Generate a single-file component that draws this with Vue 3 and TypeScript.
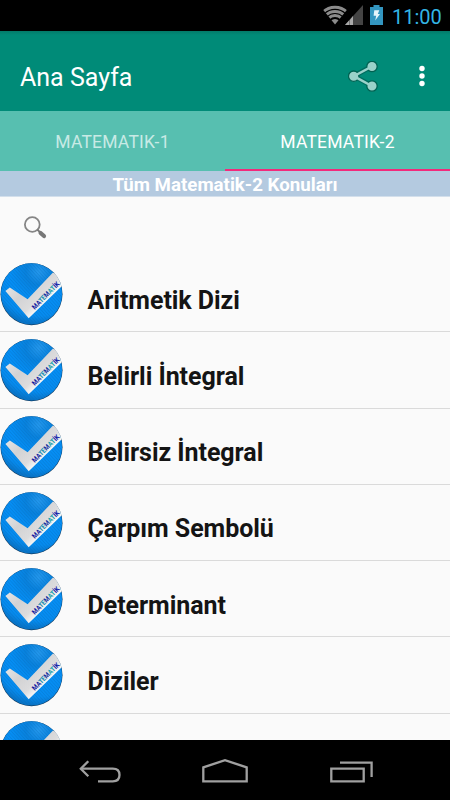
<script setup lang="ts">
interface Topic {
  id: number
  title: string
}

const topics: Topic[] = [
  'Aritmetik Dizi',
  'Belirli İntegral',
  'Belirsiz İntegral',
  'Çarpım Sembolü',
  'Determinant',
  'Diziler',
  '',
].map((title, id) => ({ id, title }))
</script>

<template>
  <div class="screen">
    <div class="status">
      <svg class="wifi" width="26" height="20" viewBox="0 0 26 20">
        <defs>
          <clipPath id="fan"><path d="M13 19.5L0 3.5Q13 -4 26 3.5Z" /></clipPath>
        </defs>
        <g clip-path="url(#fan)" fill="none" stroke="#8b8b8b" stroke-width="3">
          <circle cx="13" cy="19.5" r="17.2" />
          <circle cx="13" cy="19.5" r="13.1" />
          <circle cx="13" cy="19.5" r="9" />
          <circle cx="13" cy="19.5" r="2.8" stroke-width="5.6" />
        </g>
      </svg>
      <svg class="signal" width="18" height="20" viewBox="0 0 18 20">
        <path d="M0 20L18 0V20Z" fill="#444" />
        <path d="M0 20L4 15.6V20Z" fill="#aaa" />
        <path d="M5 20V14.4L8 11.1V20Z" fill="#aaa" />
        <path d="M4 15.6L5 14.4V20H4Z" fill="#777" />
      </svg>
      <svg class="battery" width="13" height="20" viewBox="0 0 13 20">
        <path d="M0 2H3.5V0H9.5V2H13V20H0Z" fill="#3396c0" />
        <path d="M4.3 5.3H9.3L7.8 9H10L5.2 15.5L6.2 10.8H3.6Z" fill="#e5f4fa" />
      </svg>
      <span class="clock">11:00</span>
    </div>

    <header class="bar">
      <h1 class="title">Ana Sayfa</h1>
      <svg class="share" width="32" height="32" viewBox="0 0 32 32">
        <path d="M23.8 5.2L5.8 15.1L23.8 24.8" fill="none" stroke="#006e60" stroke-width="5" />
        <g fill="#9ad2ca" stroke="#006252" stroke-width="1.3">
          <circle cx="24" cy="5.5" r="5.2" />
          <circle cx="5.7" cy="15.2" r="5.2" />
          <circle cx="24" cy="25" r="5.2" />
        </g>
        <path d="M23.8 5.5L5.8 15.2L23.8 25" fill="none" stroke="#9ad2ca" stroke-width="2.5" />
      </svg>
      <svg class="more" width="6" height="22" viewBox="0 0 6 22">
        <g fill="#fff">
          <circle cx="3" cy="3.5" r="2.7" />
          <circle cx="3" cy="11" r="2.7" />
          <circle cx="3" cy="18.5" r="2.7" />
        </g>
      </svg>
    </header>

    <nav class="tabs">
      <div class="tab">MATEMATIK-1</div>
      <div class="tab active">MATEMATIK-2</div>
    </nav>
    <div class="banner">Tüm Matematik-2 Konuları</div>

    <div class="search">
      <svg width="24" height="24" viewBox="0 0 24 24">
        <circle cx="8.3" cy="8.5" r="7.4" fill="none" stroke="#858585" stroke-width="1.8" />
        <path d="M13.4 13.6L16.4 16.6" stroke="#777" stroke-width="2" />
        <path d="M16.6 17L20 20" stroke="#777" stroke-width="4.2" stroke-linecap="round" />
      </svg>
    </div>

    <main class="list">
      <div v-for="t in topics" :key="t.id" class="row">
        <svg class="badge" width="64" height="66" viewBox="0 1 64 66">
          <defs>
            <radialGradient :id="'blue' + t.id" cx=".62" cy=".14" r=".85">
              <stop offset="0" stop-color="#2599ee" />
              <stop offset=".25" stop-color="#0882de" />
              <stop offset=".55" stop-color="#058ff6" />
              <stop offset=".85" stop-color="#068cf0" />
              <stop offset="1" stop-color="#0874c8" />
            </radialGradient>
            <linearGradient :id="'silver' + t.id" x1="0" y1="0" x2="1" y2=".75">
              <stop offset="0" stop-color="#f2f2f2" />
              <stop offset=".4" stop-color="#d2d2d4" />
              <stop offset=".62" stop-color="#dcdcdd" />
              <stop offset=".75" stop-color="#fafafa" />
              <stop offset="1" stop-color="#c4c4c6" />
            </linearGradient>
            <pattern :id="'weave' + t.id" width="2.4" height="2.4" patternUnits="userSpaceOnUse" patternTransform="rotate(48)">
              <path d="M0 .5H2.4" stroke="#0567b5" stroke-width=".7" stroke-opacity=".4" />
            </pattern>
            <clipPath :id="'disc' + t.id"><circle cx="31.5" cy="34" r="31" /></clipPath>
          </defs>
          <circle cx="31.5" cy="34.2" r="31" fill="#12395c" />
          <circle cx="31.5" cy="33.9" r="30.6" :fill="`url(#blue${t.id})`" />
          <circle cx="31.5" cy="33.9" r="30.6" :fill="`url(#weave${t.id})`" />
          <g :clip-path="`url(#disc${t.id})`">
            <path d="M5.4 31L9.8 27.6L27.6 39.2L53 12.5L66 18V22L28.7 58.2Z" :fill="`url(#silver${t.id})`" />
          </g>
          <text v-if="t.title" class="stamp" transform="translate(34.8 50) rotate(-45.5)" textLength="36" lengthAdjust="spacingAndGlyphs">
            <tspan fill="#151fa0">MA</tspan><tspan fill="#148db0">TE</tspan><tspan fill="#1a35a0">M</tspan><tspan fill="#16a0ac">AT</tspan><tspan fill="#1120a8">İK</tspan>
          </text>
        </svg>
        <span class="name">{{ t.title }}</span>
      </div>
    </main>

    <footer class="nav">
      <svg width="450" height="60" viewBox="0 0 450 60" fill="none" stroke="#a0a0a0" stroke-width="2.3">
        <path d="M81 28.7H112.8Q119.5 28.7 119.5 35Q119.5 41.3 112.8 41.3H98" />
        <path d="M88.3 21.2L80.8 28.7L88.3 36.2" />
        <path d="M203.3 41.4V27.3L225 20.2L246.7 27.3V41.4Z" />
        <path d="M331.3 28.7H363.7V41.4H331.3Z" />
        <path d="M340 22.6H371.6V37" />
      </svg>
    </footer>
  </div>
</template>

<style>
body {
  margin: 0;
  overflow: hidden;
}
</style>

<style scoped>
.screen {
  width: 450px;
  height: 800px;
  display: flex;
  flex-direction: column;
  overflow: hidden;
  background: #fafafa;
  font-family: Roboto, sans-serif;
}
.screen > * {
  flex-shrink: 0;
  box-sizing: border-box;
}
.status {
  height: 31px;
  background: #000;
  display: flex;
  align-items: flex-start;
  padding: 5px 8px 0 0;
  justify-content: flex-end;
}
.signal {
  margin-left: -3px;
}
.battery {
  margin-left: 7px;
}
.clock {
  width: 50px;
  margin-left: 9px;
  color: #33b5e5;
  font-size: 20px;
  line-height: 24px;
  white-space: nowrap;
}
.bar {
  height: 80px;
  background: linear-gradient(#037a69, #008b78 4px);
  display: flex;
  align-items: center;
  padding: 0 25px 0 20px;
}
.title {
  flex: 1;
  margin: 0;
  padding-top: 14px;
  color: #fff;
  font-size: 25px;
  line-height: 30px;
  font-weight: 400;
}
.share {
  margin: 11px 39px 0 0;
}
.more {
  margin-top: 10px;
}
.tabs {
  height: 60px;
  display: flex;
  background: #57bfb0;
}
.tab {
  flex: 1;
  box-sizing: border-box;
  border-bottom: 2px solid transparent;
  text-align: center;
  font-size: 17.5px;
  letter-spacing: 0.2px;
  line-height: 63px;
  height: 60px;
  color: #c8eae5;
}
.tab.active {
  color: #fff;
  border-bottom-color: #f22a7c;
}
.banner {
  height: 26px;
  background: #b4cae0;
  border-bottom: 1px solid #d3dfeb;
  color: #fff;
  font-weight: 700;
  font-size: 18.7px;
  line-height: 29px;
  text-align: center;
}
.search {
  height: 59px;
  padding: 19px 0 0 24px;
}
.list {
  height: 484px;
  overflow: hidden;
}
.row {
  height: 76.25px;
  box-sizing: border-box;
  padding-top: 5px;
  border-bottom: 1px solid #dadada;
  display: flex;
  align-items: flex-start;
}
.badge {
  flex: none;
}
.stamp {
  font-family: Roboto, sans-serif;
  font-size: 7px;
  font-weight: 700;
}
.name {
  margin-left: 23.5px;
  padding-top: 24.5px;
  font-size: 25px;
  letter-spacing: -0.05px;
  line-height: 30px;
  font-weight: 700;
  color: #141414;
  white-space: nowrap;
}
.nav {
  height: 60px;
  background: #000;
}
</style>
